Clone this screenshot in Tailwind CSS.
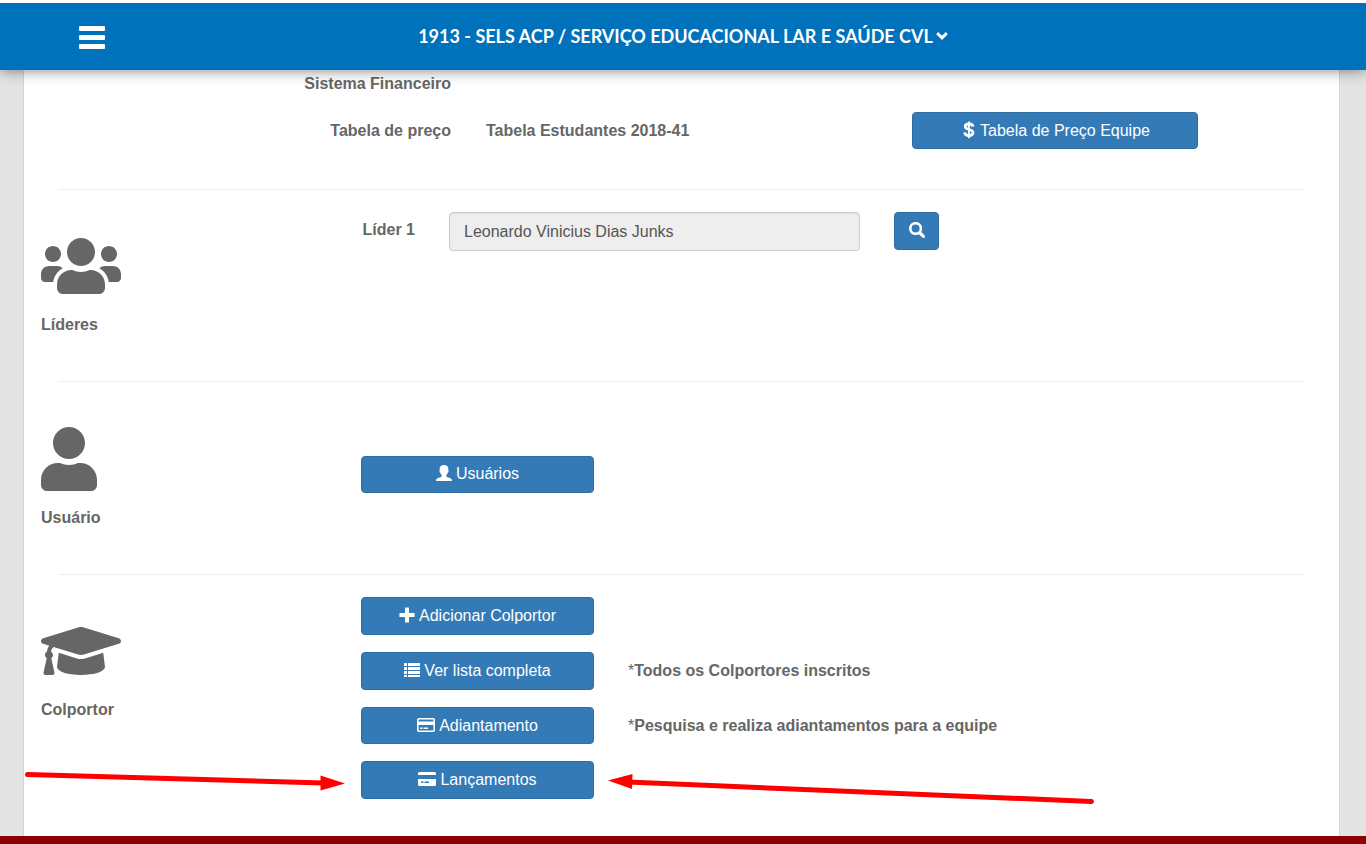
<!DOCTYPE html>
<html lang="pt-BR">
<head>
<meta charset="utf-8">
<meta name="viewport" content="width=device-width, initial-scale=1">
<title>Equipe</title>
<script src="https://cdn.jsdelivr.net/npm/@tailwindcss/browser@4"></script>
</head>
<body class="min-h-screen flex flex-col bg-[#e4e4e4] font-['Liberation_Sans',Arial,sans-serif] text-base leading-6 text-[#666]">

<header class="relative z-10 border-t-3 border-white bg-[#0072bc] shadow-[0_0_14px_rgba(0,0,0,0.5)]">
  <div class="relative flex h-[67px] items-center justify-center pb-0.5">
    <button type="button" aria-label="Menu" class="absolute left-[79px] top-[23px] flex w-[26px] flex-col gap-1">
      <span class="h-[5px] rounded-[1px] bg-white"></span>
      <span class="h-[5px] rounded-[1px] bg-white"></span>
      <span class="h-[5px] rounded-[1px] bg-white"></span>
    </button>
    <button type="button" class="flex items-center gap-[3px] font-[Lato,sans-serif] text-lg font-bold text-white">
      <span>1913 - SELS ACP / SERVIÇO EDUCACIONAL LAR E SAÚDE CVL</span>
      <svg class="h-3 w-3" viewBox="0 0 12 12" fill="none" stroke="#fff" stroke-width="3"><path d="M1.2 3.2 6 7.8 10.8 3.2"/></svg>
    </button>
  </div>
</header>

<main class="ml-[23px] mr-[26px] flex-1 border-x border-[#d6d6d6] bg-white">

  <section class="h-[119px]">
    <div class="grid grid-cols-[427fr_888fr] pt-[2px] font-bold"><span class="text-right">Sistema Financeiro</span></div>
    <div class="mt-4 grid grid-cols-[427fr_35fr_426fr_286fr_141fr] items-center">
      <span class="text-right font-bold">Tabela de preço</span>
      <span class="col-start-3 font-bold">Tabela Estudantes 2018-41</span>
      <button type="button" class="flex h-[37px] items-center justify-center gap-1 rounded border border-[#2e6da4] bg-[#337ab7] text-white">
        <svg class="mb-0.5 h-[18px] w-4" viewBox="0 0 16 18" fill="none" stroke="#fff"><path stroke-width="2.8" d="M13 5.600C12.800 3.800 11.300 3 9 3S5.200 3.900 5.200 5.600C5.200 9.600 13 7.400 13 11.600 13 13.600 11.500 14.600 9 14.600S4.900 13.600 4.700 11.400"/><path stroke-width="1.800" d="M9 .5v16.800"/></svg>
        <span>Tabela de Preço Equipe</span>
      </button>
    </div>
  </section>
  <hr class="mx-[34px] border-[#eee]">

  <section class="relative h-[191px] pt-[22px]">
    <div class="absolute left-[17px] top-[44px] font-bold">
      <svg class="mb-[15px] h-16 w-20" viewBox="0 0 640 512" fill="#666"><path d="M96 224c35.300 0 64-28.700 64-64s-28.700-64-64-64-64 28.700-64 64 28.700 64 64 64zm448 0c35.300 0 64-28.700 64-64s-28.700-64-64-64-64 28.700-64 64 28.700 64 64 64zm32 32h-64c-17.600 0-33.500 7.100-45.100 18.600 40.300 22.100 68.900 62 75.100 109.400h66c17.700 0 32-14.300 32-32v-32c0-35.300-28.700-64-64-64zm-256 0c61.900 0 112-50.100 112-112S381.900 32 320 32 208 82.100 208 144s50.100 112 112 112zm76.800 32h-8.300c-20.800 10-43.900 16-68.500 16s-47.600-6-68.500-16h-8.300C179.600 288 128 339.600 128 403.200V432c0 26.500 21.500 48 48 48h288c26.500 0 48-21.500 48-48v-28.800c0-63.600-51.600-115.200-115.200-115.200zm-223.700-13.400C161.500 263.100 145.600 256 128 256H64c-35.300 0-64 28.700-64 64v32c0 17.700 14.300 32 32 32h65.900c6.300-47.400 34.900-87.300 75.200-109.400z"/></svg>
      <h2>Líderes</h2>
    </div>
    <div class="grid grid-cols-[391fr_34fr_411fr_34fr_45fr_400fr] items-start">
      <label for="lider" class="text-right font-bold leading-9">Líder 1</label>
      <input id="lider" type="text" readonly value="Leonardo Vinicius Dias Junks" class="col-start-3 h-[39px] w-full rounded border border-[#ccc] bg-[#eee] px-3.5 text-[#555] shadow-[inset_0_1px_1px_rgba(0,0,0,0.075)]">
      <button type="button" aria-label="Pesquisar" class="col-start-5 flex h-[38px] items-center justify-center rounded border border-[#2e6da4] bg-[#337ab7]">
        <svg class="mb-0.5 h-4 w-4" viewBox="0 0 16 16" fill="none" stroke="#fff"><circle cx="6.600" cy="6.500" r="5.300" stroke-width="2.600"/><path stroke-width="3.200" stroke-linecap="round" d="M11 11l3.400 3.300"/></svg>
      </button>
    </div>
  </section>
  <hr class="mx-[34px] border-[#eee]">

  <section class="relative h-[192px] pt-[74px]">
    <div class="absolute left-[17px] top-[45px] font-bold">
      <svg class="mb-[15px] h-16 w-14" viewBox="0 0 448 512" fill="#666"><path d="M224 256c70.700 0 128-57.300 128-128S294.700 0 224 0 96 57.300 96 128s57.300 128 128 128zm89.600 32h-16.700c-22.200 10.200-46.900 16-72.900 16s-50.600-5.800-72.900-16h-16.700C60.200 288 0 348.200 0 422.400V464c0 26.500 21.500 48 48 48h352c26.500 0 48-21.500 48-48v-41.600c0-74.200-60.200-134.400-134.400-134.400z"/></svg>
      <h2>Usuário</h2>
    </div>
    <div class="grid grid-cols-[337fr_233fr_745fr]">
      <button type="button" class="col-start-2 flex h-[37px] items-center justify-center gap-1 rounded border border-[#2e6da4] bg-[#337ab7] pb-0.5 text-white">
        <svg class="mb-0.5 h-4 w-4" viewBox="0 0 16 16" fill="#fff"><path d="M8 0C5.200 0 3.600 1.600 3.600 4.200c0 .5.100.9.100 1.300-.6.300-.2 1.900.5 2.100.2 1.200.8 2 1.500 2.700v1.200C5.300 12.400 0 13 0 15.200V16h16v-.8c0-2.200-5.300-2.800-5.700-3.700v-1.200c.7-.7 1.300-1.500 1.500-2.700.7-.2 1.100-1.800.5-2.100 0-.4.100-.8.100-1.300C12.400 1.600 10.800 0 8 0z"/></svg>
        <span>Usuários</span>
      </button>
    </div>
  </section>
  <hr class="mx-[34px] border-[#eee]">

  <section class="relative pt-[22px] pb-9">
    <div class="absolute left-[17px] top-[44px] font-bold">
      <svg class="mb-[15px] h-16 w-20" viewBox="0 0 640 512" fill="#666"><path d="M622.340 153.200L343.400 67.500c-15.200-4.670-31.600-4.670-46.790 0L17.660 153.200c-23.540 7.230-23.540 38.360 0 45.590l48.630 14.940c-10.670 13.190-17.230 29.280-17.880 46.900C38.780 266.150 32 276.110 32 288c0 10.780 5.680 19.850 13.860 25.650L20.330 428.530C18.110 438.520 25.710 448 35.940 448h56.110c10.240 0 17.840-9.480 15.620-19.470L82.140 313.650C90.320 307.850 96 298.780 96 288c0-11.570-6.470-21.250-15.660-26.870.76-15.020 8.440-28.300 20.690-36.720L296.600 284.500c9.060 2.780 26.440 6.250 46.790 0l278.950-85.700c23.550-7.240 23.550-38.360 0-45.600zM352.790 315.090c-28.530 8.760-52.840 3.920-65.590 0l-145.020-44.550L128 384c0 35.350 85.960 64 192 64s192-28.650 192-64l-14.180-113.470-145.030 44.560z"/></svg>
      <h2>Colportor</h2>
    </div>
    <div class="grid grid-cols-[337fr_233fr_34fr_711fr] items-center gap-y-[17px]">
      <button type="button" class="col-start-2 flex h-[38px] items-center justify-center gap-1 rounded border border-[#2e6da4] bg-[#337ab7] text-white">
        <svg class="mb-0.5 h-4 w-4" viewBox="0 0 16 16" fill="#fff"><path d="M6.500.5h3a.5.5 0 0 1 .5.500v5h5a.6.600 0 0 1 .6.600v2.800a.6.600 0 0 1-.6.600h-5v5a.5.500 0 0 1-.5.500h-3a.5.500 0 0 1-.5-.5v-5H1a.6.600 0 0 1-.6-.6V6.600A.6.600 0 0 1 1 6h5V1a.5.500 0 0 1 .5-.5z"/></svg>
        <span>Adicionar Colportor</span>
      </button>

      <button type="button" class="col-start-2 flex h-[38px] items-center justify-center gap-1 rounded border border-[#2e6da4] bg-[#337ab7] text-white">
        <svg class="mb-0.5 h-4 w-4" viewBox="0 0 16 16" fill="#fff"><path d="M0 1h3v3H0zM4 1h12v3H4zM0 5h3v3H0zM4 5h12v3H4zM0 9h3v3H0zM4 9h12v3H4zM0 13h3v2H0zM4 13h12v2H4z"/></svg>
        <span>Ver lista completa</span>
      </button>
      <span class="col-start-4 font-bold"><span class="font-normal">*</span>Todos os Colportores inscritos</span>

      <button type="button" class="col-start-2 flex h-[37px] items-center justify-center gap-1 rounded border border-[#2e6da4] bg-[#337ab7] text-white">
        <svg class="mb-0.5 h-4 w-[18px]" viewBox="0 0 18 16"><rect x=".8" y="1.800" width="16.400" height="12.400" rx="1" fill="none" stroke="#fff" stroke-width="1.600"/><path fill="#fff" d="M1 4.500h16V8H1zM3 10.500h2.500V12H3zM6.500 10.500h4.500V12H6.500z"/></svg>
        <span>Adiantamento</span>
      </button>
      <span class="col-start-4 font-bold"><span class="font-normal">*</span>Pesquisa e realiza adiantamentos para a equipe</span>

      <div class="relative col-start-2">
        <button type="button" class="flex h-[38px] w-full items-center justify-center gap-1 rounded border border-[#2e6da4] bg-[#337ab7] text-white">
          <svg class="mb-0.5 h-4 w-[18px]" viewBox="0 0 18 16"><path fill="#fff" fill-rule="evenodd" d="M0 4V2.500Q0 1 1.500 1h15Q18 1 18 2.500V4zM0 8h18v5.500q0 1.500-1.500 1.500h-15Q0 15 0 13.500zM3 10.500V12h2.500v-1.500zM6.500 10.500V12H11v-1.500z"/></svg>
          <span>Lançamentos</span>
        </button>
        <svg class="absolute right-full top-0 mr-4 h-10 w-80" viewBox="0 0 320 40"><path d="M2.500 13.500 298 22" stroke="#f00" stroke-width="5" stroke-linecap="round"/><path fill="#f00" d="M295.500 14.500 320 22.500 295.500 29.500z"/></svg>
        <svg class="absolute left-full top-0 ml-3.5 h-[50px] w-[490px]" viewBox="0 0 490 50"><path d="M20 21 483.500 40.500" stroke="#f00" stroke-width="5" stroke-linecap="round"/><path fill="#f00" d="M24.500 13 0 19.500 24 28z"/></svg>
      </div>
    </div>
  </section>
</main>

<footer class="h-2 bg-[#8b0000]"></footer>
</body>
</html>
